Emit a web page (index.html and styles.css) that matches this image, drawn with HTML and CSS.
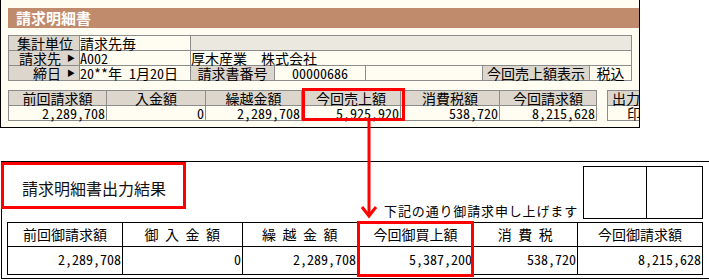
FILE: index.html
```html
<!DOCTYPE html>
<html lang="ja">
<head>
<meta charset="UTF-8">
<title>請求明細書</title>
<link rel="stylesheet" href="styles.css">
</head>
<body>
<div class="page">
    <div class="window">
        <div class="title">請求明細書</div>
        <div class="info">
            <div class="lbl">集計単位</div>
            <div class="val">請求先毎</div>
            <div class="blank span5"></div>

            <div class="lbl">請求先<span class="tri">▶</span></div>
            <div class="val">A002</div>
            <div class="val wide span5">厚木産業　株式会社</div>

            <div class="lbl">締日<span class="tri">▶</span></div>
            <div class="val">20**年 1月20日</div>
            <div class="lbl center">請求書番号</div>
            <div class="val center">00000686</div>
            <div class="val"></div>
            <div class="lbl center">今回売上額表示</div>
            <div class="val center">税込</div>
        </div>
        <div class="summary-row">
            <div class="summary">
                <div class="head">前回請求額</div>
                <div class="head">入金額</div>
                <div class="head">繰越金額</div>
                <div class="head">今回売上額</div>
                <div class="head">消費税額</div>
                <div class="head">今回請求額</div>
                <div class="num">2,289,708</div>
                <div class="num">0</div>
                <div class="num">2,289,708</div>
                <div class="num">5,925,920</div>
                <div class="num">538,720</div>
                <div class="num">8,215,628</div>
            </div>
            <div class="output">
                <div class="head left">出力設定</div>
                <div class="num left2">印刷</div>
            </div>
        </div>
    </div>

    <div class="doc">
        <div class="doc-head">
            <div class="doc-title">請求明細書出力結果</div>
            <div class="note">下記の通り御請求申し上げます</div>
            <div class="stamp"><span></span><span></span></div>
        </div>
        <div class="bill">
            <div class="bhead">前回御請求額</div>
            <div class="bhead spaced">御入金額</div>
            <div class="bhead spaced">繰越金額</div>
            <div class="bhead">今回御買上額</div>
            <div class="bhead spaced">消費税</div>
            <div class="bhead">今回御請求額</div>
            <div class="bnum">2,289,708</div>
            <div class="bnum">0</div>
            <div class="bnum">2,289,708</div>
            <div class="bnum">5,387,200</div>
            <div class="bnum">538,720</div>
            <div class="bnum">8,215,628</div>
        </div>
    </div>

    <div class="mark mark-top"></div>
    <div class="mark mark-bottom"></div>
    <svg class="arrow" width="709" height="280" viewBox="0 0 709 280">
        <line x1="369" y1="120" x2="369" y2="215" stroke="#f00" stroke-width="3"/>
        <polyline points="362,207 369,216 376,207" fill="none" stroke="#f00" stroke-width="3"/>
    </svg>
</div>
</body>
</html>
```

FILE: styles.css
```css
body {
    margin: 0;
    background: #fff;
    font-family: "Noto Sans CJK JP", sans-serif;
    color: #000;
}

.page {
    position: relative;
    width: 709px;
    height: 280px;
    overflow: hidden;
}

/* top window */
.window {
    box-sizing: border-box;
    width: 640px;
    height: 128px;
    border: 1px solid #000;
    border-top: 0;
    background: #fffcf1;
    padding: 8px 0 0 7px;
    overflow: hidden;
}

.title {
    height: 20px;
    background: #c08a6d;
    color: #fff;
    font-weight: bold;
    font-size: 15px;
    line-height: 20px;
    padding-left: 8px;
}

.info {
    display: grid;
    grid-template-columns: 70px 110px 83px 90px 116px 106px 41px;
    grid-auto-rows: 14px;
    gap: 1px;
    padding: 1px;
    width: max-content;
    margin-top: 7px;
    background: #8c8c8c;
    font-size: 14px;
    line-height: 14px;
    font-feature-settings: "hwid";
}

.info > div {
    white-space: nowrap;
}

.lbl {
    background: #dcd6cc;
    display: flex;
    justify-content: flex-end;
    padding-right: 6px;
}

.lbl.center {
    justify-content: center;
    padding-right: 0;
}

.tri {
    font-size: 8px;
    width: 14px;
    text-align: right;
    margin-right: -2px;
}

.val {
    background: #fffcf1;
}

.val.center {
    text-align: center;
}

.val.wide {
    font-feature-settings: normal;
}

.blank {
    background: #ebe8e0;
}

.span5 {
    grid-column: span 5;
}

.summary-row {
    display: flex;
    gap: 10px;
    margin-top: 9px;
}

.summary, .output {
    display: grid;
    grid-auto-rows: 14px;
    gap: 1px;
    padding: 1px;
    background: #8c8c8c;
    font-size: 14px;
    line-height: 14px;
    font-feature-settings: "hwid";
    flex-shrink: 0;
}

.summary {
    grid-template-columns: 97px 98px 95px 98px 98px 96px;
}

.output {
    grid-template-columns: 80px;
}

.head {
    background: #dcd6cc;
    text-align: center;
    white-space: nowrap;
}

.head.left {
    text-align: left;
    padding-left: 4px;
}

.num {
    background: #fffcf1;
    text-align: right;
    padding-right: 1px;
}

.num.left2 {
    text-align: left;
    padding-left: 19px;
}

/* printed document */
.doc {
    box-sizing: border-box;
    height: 118px;
    margin: 33px 0 0 1px;
    border: 1px solid #000;
    border-right: 0;
    background: #fff;
}

.doc-head {
    display: flex;
    align-items: flex-end;
    height: 60px;
}

.doc-title {
    align-self: flex-start;
    box-sizing: border-box;
    width: 185px;
    height: 47px;
    margin-left: -1px;
    border: 3px solid #f00;
    padding: 5px 0 0 18px;
    font-size: 16px;
    line-height: 36px;
    color: #111;
}

.note {
    margin-left: auto;
    margin-bottom: 3px;
    font-size: 13px;
    line-height: 16px;
    letter-spacing: 0.85px;
}

.stamp {
    display: flex;
    box-sizing: border-box;
    width: 120px;
    height: 53px;
    border: 1px solid #000;
    margin: 0 6px 3px 5px;
}

.stamp span:first-child {
    width: 62px;
    border-right: 1px solid #000;
}

.bill {
    display: grid;
    grid-template-columns: 114px 119px 114px 115px 103px 124px;
    grid-template-rows: 23px 27px;
    gap: 1px;
    padding: 1px;
    width: max-content;
    margin-left: 5px;
    background: #000;
    font-size: 14px;
    font-feature-settings: "hwid";
}

.bhead {
    background: #fff;
    text-align: center;
    line-height: 23px;
}

.bhead.spaced {
    letter-spacing: 6.5px;
    padding-left: 6px;
}

.bnum {
    background: #fff;
    text-align: right;
    padding-right: 1px;
    line-height: 25px;
}

/* annotations */
.mark {
    position: absolute;
    box-sizing: border-box;
    border: 3px solid #f00;
}

.mark-top {
    left: 302px;
    top: 88px;
    width: 103px;
    height: 33px;
}

.mark-bottom {
    left: 357px;
    top: 221px;
    width: 117px;
    height: 56px;
}

.arrow {
    position: absolute;
    left: 0;
    top: 0;
}
```
